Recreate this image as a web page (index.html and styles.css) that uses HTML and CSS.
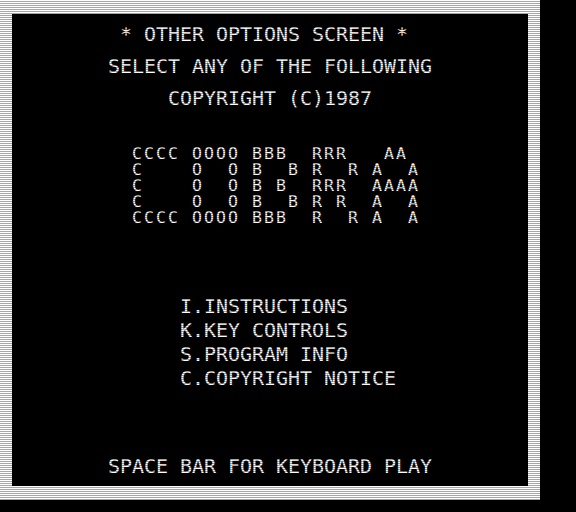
FILE: index.html
```html
<!DOCTYPE html>
<html>
<head>
<meta charset="utf-8">
<title>Other Options Screen</title>
<link rel="stylesheet" href="styles.css">
</head>
<body>
<div class="frame">
  <div class="screen">
    <div class="header">
      <div class="line">* OTHER OPTIONS SCREEN * </div>
      <div class="line">SELECT ANY OF THE FOLLOWING</div>
      <div class="line">COPYRIGHT (C)1987</div>
    </div>
    <div class="logo">CCCC OOOO BBB  RRR   AA
C    O  O B  B R  R A  A
C    O  O B B  RRR  AAAA
C    O  O B  B R R  A  A
CCCC OOOO BBB  R  R A  A</div>
    <div class="menu">
      <div class="item">I.INSTRUCTIONS</div>
      <div class="item">K.KEY CONTROLS</div>
      <div class="item">S.PROGRAM INFO</div>
      <div class="item">C.COPYRIGHT NOTICE</div>
    </div>
    <div class="footer">SPACE BAR FOR KEYBOARD PLAY</div>
  </div>
  <div class="scanlines"></div>
</div>
</body>
</html>
```
FILE: styles.css
```css
html, body {
  margin: 0;
  padding: 0;
  background: #000;
}
body {
  width: 576px;
  height: 512px;
  overflow: hidden;
}
.frame {
  position: relative;
  width: 540px;
  height: 500px;
  box-sizing: border-box;
  padding: 14px 12px;
  background: #fff;
}
.screen {
  height: 472px;
  background: #000;
  color: #fff;
  font-family: "DejaVu Sans Mono", "Liberation Mono", monospace;
  font-size: 19.93px;
  display: flex;
  flex-direction: column;
  padding-top: 5px;
  box-sizing: border-box;
}
.header {
  display: flex;
  flex-direction: column;
  align-items: center;
}
.line {
  line-height: 32px;
  white-space: pre;
}
.logo {
  white-space: pre;
  font-size: 16.5px;
  letter-spacing: 2.07px;
  line-height: 16px;
  padding-left: 120px;
  margin-top: 31px;
}
.menu {
  padding-left: 168px;
  margin-top: 69px;
}
.item {
  line-height: 24px;
  white-space: pre;
}
.footer {
  line-height: 32px;
  text-align: center;
  margin-top: 60px;
  white-space: pre;
}
.scanlines {
  position: absolute;
  inset: 0;
  pointer-events: none;
  background: repeating-linear-gradient(to bottom, transparent 0, transparent 1px, rgba(0,0,0,0.35) 1px, rgba(0,0,0,0.35) 2px);
}
```
